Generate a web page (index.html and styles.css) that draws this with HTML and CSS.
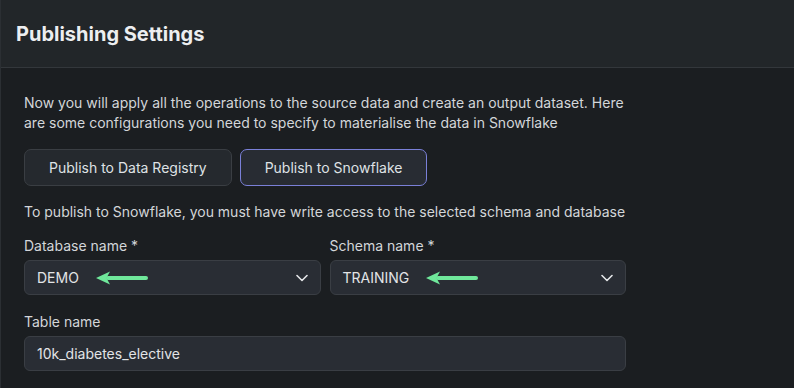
FILE: index.html
```html
<!DOCTYPE html>
<html lang="en">

<head>
  <meta charset="UTF-8" />
  <meta name="viewport" content="width=device-width, initial-scale=1.0" />
  <title>Publishing Settings</title>
  <link rel="stylesheet" href="styles.css">
</head>

<body>

  <!-- Header -->
  <div class="header">
    <h2>Publishing Settings</h2>
  </div>

  <!-- Main Content -->
  <div class="main-container">
    <p class="intro">Now you will apply all the operations to the source data and create an output dataset. Here are some configurations you need to specify to materialise the data in Snowflake</p>

    <div class="target-buttons">
      <button class="target-btn">Publish to Data Registry</button>
      <button class="target-btn active">Publish to Snowflake</button>
    </div>

    <p class="note">To publish to Snowflake, you must have write access to the selected schema and database</p>

    <div class="field-row">
      <div class="field">
        <label>Database name *</label>
        <div class="select">
          <span>DEMO</span>
          <svg class="arrow" width="53" height="14" viewBox="0 0 53 14">
            <path d="M12 7 H50" stroke="#6fe89b" stroke-width="4" stroke-linecap="round" />
            <path d="M0 7 L14 0.5 L10.5 7 L14 13.5 Z" fill="#6fe89b" />
          </svg>
          <svg class="chevron" width="12" height="8" viewBox="0 0 12 8">
            <path d="M1 1.5 L6 6.5 L11 1.5" fill="none" stroke="#e4e6e8" stroke-width="1.6" stroke-linecap="round" stroke-linejoin="round" />
          </svg>
        </div>
      </div>
      <div class="field">
        <label>Schema name *</label>
        <div class="select">
          <span>TRAINING</span>
          <svg class="arrow" width="53" height="14" viewBox="0 0 53 14">
            <path d="M12 7 H50" stroke="#6fe89b" stroke-width="4" stroke-linecap="round" />
            <path d="M0 7 L14 0.5 L10.5 7 L14 13.5 Z" fill="#6fe89b" />
          </svg>
          <svg class="chevron" width="12" height="8" viewBox="0 0 12 8">
            <path d="M1 1.5 L6 6.5 L11 1.5" fill="none" stroke="#e4e6e8" stroke-width="1.6" stroke-linecap="round" stroke-linejoin="round" />
          </svg>
        </div>
      </div>
    </div>

    <div class="field">
      <label>Table name</label>
      <div class="text-input">10k_diabetes_elective</div>
    </div>
  </div>

</body>

</html>
```

FILE: styles.css
```css
body {
  font-family: Inter, "Noto Sans", sans-serif;
  background-color: #1b1e21;
  color: #d6d9dc;
  margin: 0;
  padding: 0;
  border-left: 1px solid #2b2f33;
  height: 388px;
  overflow: hidden;
}

/* Header */
.header {
  background-color: #222629;
  border-bottom: 1px solid #33373b;
  height: 67px;
  display: flex;
  align-items: center;
  padding: 0 15px;
}

.header h2 {
  margin: 0;
  font-size: 20px;
  font-weight: 700;
  color: #eceef0;
}

.main-container {
  padding: 25px 23px;
  width: 602px;
}

.intro {
  margin: 0;
  font-size: 14px;
  line-height: 20px;
  color: #d3d6d9;
}

.target-buttons {
  display: flex;
  gap: 8px;
  margin-top: 16px;
}

.target-btn {
  font-family: inherit;
  font-size: 14px;
  color: #dfe2e5;
  background-color: #25292e;
  border: 1px solid #3a3e43;
  border-radius: 7px;
  height: 37px;
  padding: 0 24px;
  cursor: pointer;
}

.target-btn.active {
  border-color: #7a80d8;
  background-color: #282c33;
}

.note {
  margin: 16px 0 0;
  font-size: 14px;
  line-height: 20px;
  color: #d3d6d9;
  white-space: nowrap;
}

.field-row {
  display: grid;
  grid-template-columns: 1fr 1fr;
  gap: 9px;
  margin-top: 14px;
}

.field label {
  display: block;
  font-size: 14px;
  line-height: 20px;
  color: #d3d6d9;
  margin-bottom: 4px;
}

.select,
.text-input {
  display: flex;
  align-items: center;
  height: 33px;
  padding: 0 12px;
  background-color: #292d34;
  border: 1px solid #3a3e44;
  border-radius: 6px;
  font-size: 14px;
  color: #e2e4e6;
}

.select .arrow {
  margin-left: 17px;
}

.select .chevron {
  margin-left: auto;
}

.field-row + .field {
  margin-top: 17px;
}
```
